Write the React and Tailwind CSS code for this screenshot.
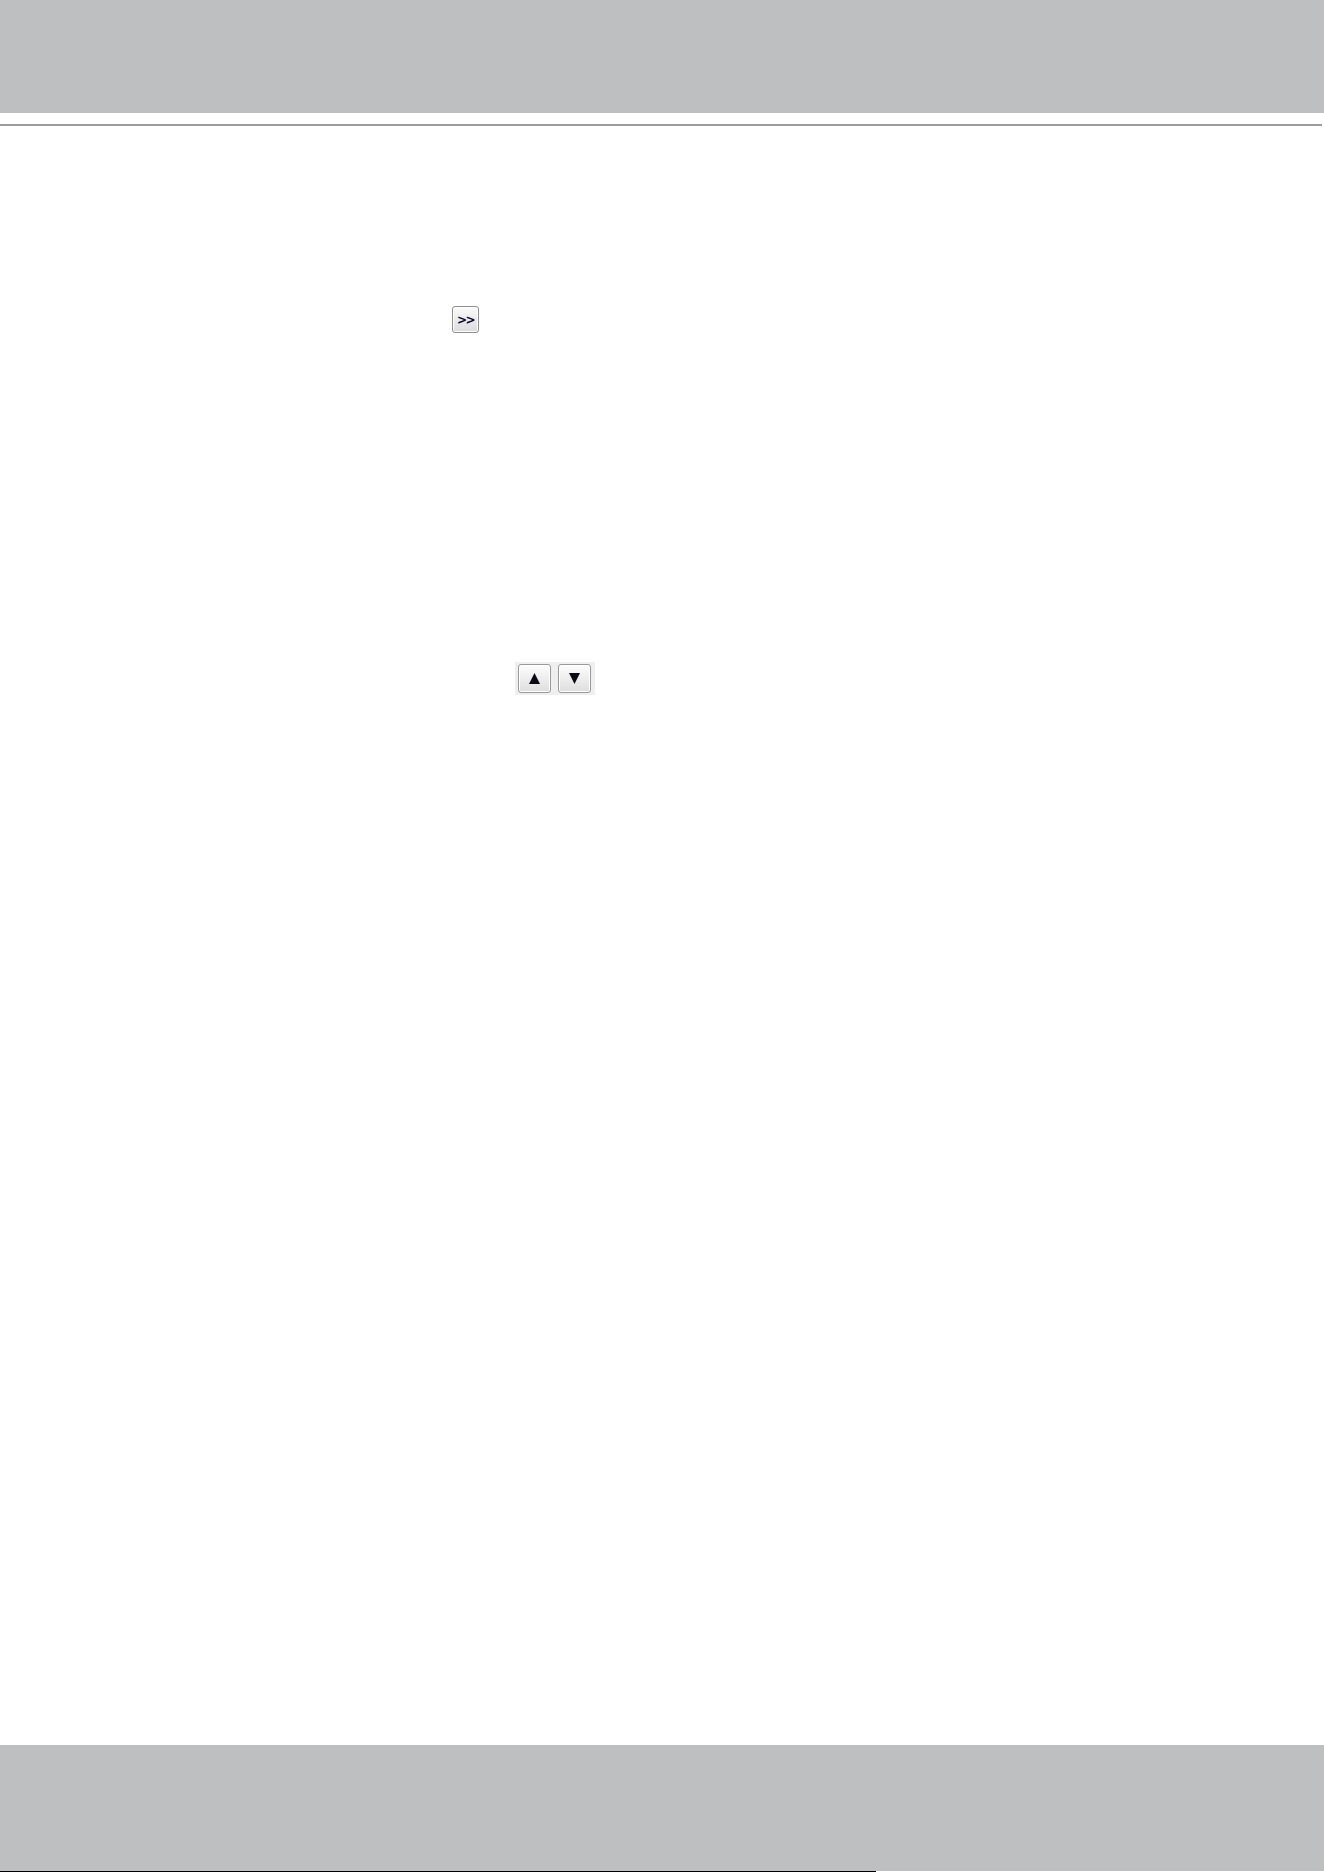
export default function App() {
  return (
    <div className="w-[1324px] h-[1872px] bg-white flex flex-col overflow-hidden" style={{ fontFamily: '"Liberation Sans", Arial, sans-serif' }}>
      <div className="h-[113px] w-full bg-[#bebfc1] shrink-0" />
      <div className="mt-[11px] h-[2px] w-[1322px] bg-[#9c9c9c] shrink-0" />
      <div className="mt-[180px] ml-[452px] shrink-0">
        <button className="w-[27px] h-[27px] rounded-[3px] border border-[#8e8e8e] bg-gradient-to-b from-[#fbfbfb] to-[#dcdcdc] flex items-center justify-center p-0 shadow-[inset_0_0_0_1px_#ffffff]">
          <span className="text-[12px] font-bold leading-none tracking-[-1.5px] text-[#0c0c30]" style={{ fontFamily: '"DejaVu Sans", sans-serif' }}>&gt;&gt;</span>
        </button>
      </div>
      <div className="mt-[329px] ml-[515px] shrink-0 w-[80px] h-[33px] bg-[#efefef] flex items-center gap-[7px] pl-[3px]">
        <button className="w-[33px] h-[29px] rounded-[3px] border border-[#9a9a9a] bg-gradient-to-b from-[#fdfdfd] to-[#dedede] flex items-center justify-center p-0 shadow-[inset_0_0_0_1px_#ffffff]">
          <svg width="11" height="11" viewBox="0 0 11 11"><polygon points="5.5,0 11,11 0,11" fill="#0a0a14" /></svg>
        </button>
        <button className="w-[33px] h-[29px] rounded-[3px] border border-[#9a9a9a] bg-gradient-to-b from-[#fdfdfd] to-[#dedede] flex items-center justify-center p-0 shadow-[inset_0_0_0_1px_#ffffff]">
          <svg width="11" height="11" viewBox="0 0 11 11"><polygon points="0,0 11,0 5.5,11" fill="#0a0a14" /></svg>
        </button>
      </div>
      <div className="flex-1" />
      <div className="h-[126px] w-full bg-[#bebfc1] shrink-0" />
      <div className="h-[1px] w-full flex shrink-0">
        <div className="w-[876px] h-full bg-black" />
      </div>
    </div>
  );
}
